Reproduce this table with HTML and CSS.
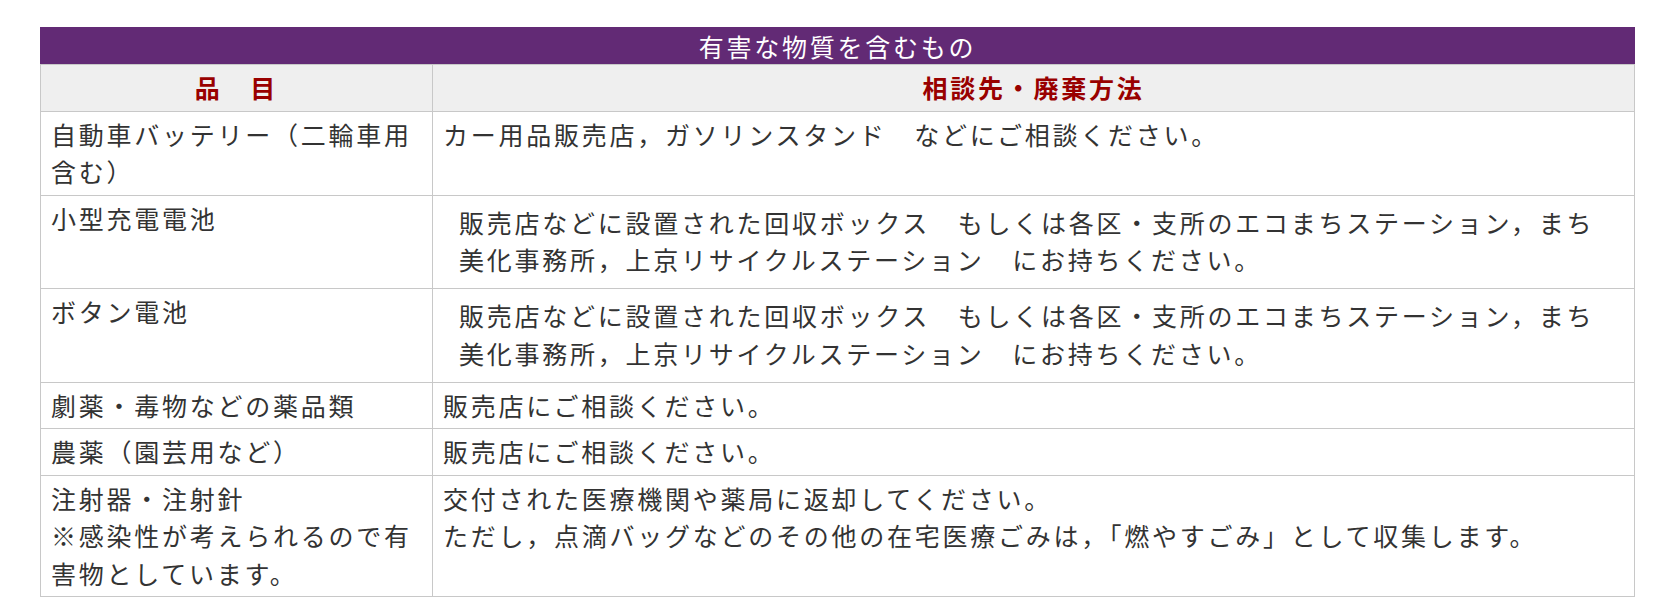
FILE: index.html
```html
<!DOCTYPE html>
<html lang="ja">
<head>
<meta charset="utf-8">
<title>有害な物質を含むもの</title>
<link rel="stylesheet" href="styles.css">
</head>
<body>
<table class="haz">
  <colgroup>
    <col class="c-item">
    <col class="c-method">
  </colgroup>
  <thead>
    <tr><th colspan="2" class="title">有害な物質を含むもの</th></tr>
    <tr><th class="head">品　目</th><th class="head">相談先・廃棄方法</th></tr>
  </thead>
  <tbody>
    <tr><td>自動車バッテリー（二輪車用含む）</td><td>カー用品販売店，ガソリンスタンド　などにご相談ください。</td></tr>
    <tr><td>小型充電電池</td><td><div class="ind">販売店などに設置された回収ボックス　もしくは各区・支所のエコまちステーション，まち<br>美化事務所，上京リサイクルステーション　にお持ちください。</div></td></tr>
    <tr><td>ボタン電池</td><td><div class="ind">販売店などに設置された回収ボックス　もしくは各区・支所のエコまちステーション，まち<br>美化事務所，上京リサイクルステーション　にお持ちください。</div></td></tr>
    <tr><td>劇薬・毒物などの薬品類</td><td>販売店にご相談ください。</td></tr>
    <tr><td>農薬（園芸用など）</td><td>販売店にご相談ください。</td></tr>
    <tr><td>注射器・注射針<br>※感染性が考えられるので有害物としています。</td><td>交付された医療機関や薬局に返却してください。<br>ただし，点滴バッグなどのその他の在宅医療ごみは，「燃やすごみ」として収集します。</td></tr>
  </tbody>
</table>
</body>
</html>
```

FILE: styles.css
```css
html, body {
  margin: 0;
  padding: 0;
  background: #ffffff;
}

body {
  font-family: "Noto Sans CJK JP", "Noto Sans", sans-serif;
  font-size: 25px;
  line-height: 37.5px;
  color: #333333;
}

.haz {
  border-collapse: collapse;
  margin: 27px 0 0 40px;
  width: 1594px;
  table-layout: fixed;
}

.c-item { width: 392px; }
.c-method { width: 1202px; }

.haz th,
.haz td {
  border: 1px solid #c8c8c8;
  padding: 4px 10px;
  letter-spacing: 2.75px;
  vertical-align: top;
  text-align: left;
}

.haz th.title {
  background: #622a75;
  border-color: #622a75;
  border-bottom-color: #c8c8c8;
  color: #ffffff;
  font-weight: normal;
  text-align: center;
  padding: 0 10px;
  line-height: 36px;
}

.haz th.head {
  background: #efefef;
  color: #990000;
  font-weight: bold;
  text-align: center;
}

.ind {
  padding: 4px 0 5.5px 16px;
}
```
